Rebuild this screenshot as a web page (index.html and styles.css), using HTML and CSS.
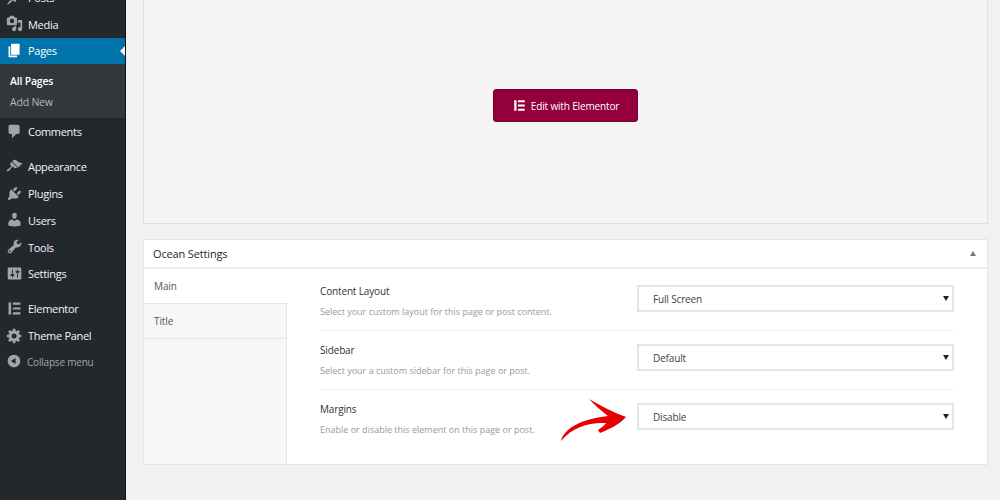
FILE: index.html
```html
<!DOCTYPE html>
<html lang="en">
<head>
<meta charset="utf-8">
<title>Edit Page</title>
<link rel="stylesheet" href="styles.css">
</head>
<body>
<div class="layout">
  <nav class="sidebar">
    <ul class="menu">
      <li class="item"><svg class="ico" viewBox="0 0 20 20"><path d="M10.44 3.02l1.82-1.82 6.36 6.35-1.83 1.82c-1.05-.68-2.48-.57-3.41.36l-.75.75c-.92.93-1.04 2.35-.35 3.41l-1.83 1.82-2.41-2.41-2.8 2.79c-.42.42-3.38 2.71-3.8 2.29s1.86-3.39 2.28-3.81l2.79-2.79L4.1 9.36l1.83-1.82c1.05.69 2.48.57 3.4-.36l.75-.75c.93-.92 1.05-2.35.36-3.41z"/></svg>Posts</li>
      <li class="item"><svg class="ico" viewBox="0 0 20 20"><path d="M13 11V4c0-.55-.45-1-1-1h-1.67L9 1H5L3.67 3H2c-.55 0-1 .45-1 1v7c0 .55.45 1 1 1h10c.55 0 1-.45 1-1zM7 4.5c1.38 0 2.5 1.12 2.5 2.5S8.38 9.5 7 9.5 4.5 8.38 4.5 7 5.62 4.5 7 4.5zM14 6h5v10.5c0 1.38-1.12 2.5-2.5 2.5S14 17.88 14 16.5s1.12-2.5 2.5-2.5c.17 0 .34.02.5.05V9h-3V6zm-4 8.05V13h2v3.5c0 1.38-1.12 2.5-2.5 2.5S7 17.88 7 16.5 8.12 14 9.5 14c.17 0 .34.02.5.05z"/></svg>Media</li>
      <li class="item active"><svg class="ico" viewBox="0 0 20 20"><path d="M6 15V2h10v13H6zm-1 1h8v2H3V5h2v11z"/></svg>Pages</li>
      <li class="submenu">
        <div class="sub-link current">All Pages</div>
        <div class="sub-link">Add New</div>
      </li>
      <li class="item after-sub"><svg class="ico" viewBox="0 0 20 20"><path d="M5 2h9c1.100 0 2 .9 2 2v7c0 1.100-.9 2-2 2h-2l-5 5v-5H5c-1.100 0-2-.9-2-2V4c0-1.100.9-2 2-2z"/></svg>Comments</li>
      <li class="item group-start"><svg class="ico" viewBox="0 0 20 20"><path d="M14.480 11.060L7.410 3.990l1.500-1.500c.5-.56 2.300-.47 3.510.32 1.210.8 1.430 1.280 2.910 2.100 1.180.64 2.450 1.260 4.450.85zm-.71.71L6.700 4.700 4.930 6.470c-.39.39-.39 1.020 0 1.410l1.060 1.060c.39.39.39 1.030 0 1.420-.6.6-1.430 1.110-2.210 1.690-.35.26-.7.53-1.010.84C1.430 13.230.4 14.750 1.100 15.450c.7.7 2.210-.33 3.550-1.670.31-.31.58-.66.84-1.010.58-.78 1.090-1.610 1.690-2.210.39-.39 1.020-.39 1.410 0l1.060 1.060c.39.39 1.020.39 1.410 0z"/></svg>Appearance</li>
      <li class="item"><svg class="ico" viewBox="0 0 20 20"><path d="M13.110 4.360L9.870 7.600 8 5.730l3.240-3.240c.35-.34 1.050-.2 1.560.32.52.51.66 1.210.31 1.550zm-8 1.770l.91-1.120 9.010 9.010-1.190.84c-.71.71-2.630 1.160-3.820 1.160H6.140L4.900 17.260c-.59.59-1.540.59-2.120 0-.59-.58-.59-1.530 0-2.120l1.240-1.240v-3.880c0-1.130.4-3.190 1.090-3.890zm7.260 3.970l3.240-3.240c.34-.35 1.040-.21 1.550.31.52.51.66 1.210.31 1.550l-3.240 3.250z"/></svg>Plugins</li>
      <li class="item"><svg class="ico" viewBox="0 0 20 20"><path d="M10 9.250c-2.270 0-2.730-3.440-2.730-3.440C7 4.020 7.820 2 9.970 2c2.160 0 2.980 2.020 2.710 3.810 0 0-.41 3.440-2.680 3.440zm0 2.570L12.720 10c2.390 0 4.520 2.330 4.520 4.530v2.490s-3.650 1.130-7.240 1.130c-3.650 0-7.240-1.130-7.240-1.130v-2.490c0-2.250 1.940-4.480 4.470-4.480z"/></svg>Users</li>
      <li class="item"><svg class="ico" viewBox="0 0 20 20"><path d="M16.680 9.770c-1.340 1.340-3.300 1.670-4.950.99l-5.410 6.520c-.99.99-2.590.99-3.580 0s-.99-2.590 0-3.570l6.520-5.420c-.68-1.650-.35-3.610.99-4.950 1.280-1.280 3.120-1.620 4.720-1.060l-2.890 2.890 2.820 2.820 2.860-2.870c.53 1.580.18 3.390-1.080 4.650zM3.810 16.210c.4.39 1.040.39 1.430 0 .4-.4.4-1.040 0-1.430-.39-.4-1.030-.4-1.430 0-.39.39-.39 1.030 0 1.430z"/></svg>Tools</li>
      <li class="item"><svg class="ico" viewBox="0 0 20 20"><path d="M18 16V4c0-.55-.45-1-1-1H3c-.55 0-1 .45-1 1v12c0 .55.45 1 1 1h14c.55 0 1-.45 1-1zM8 11h1c.55 0 1 .45 1 1s-.45 1-1 1H8v1.500c0 .28-.22.5-.5.5s-.5-.22-.5-.5V13H6c-.55 0-1-.45-1-1s.45-1 1-1h1V5.500c0-.28.22-.5.5-.5s.5.22.5.5V11zm5-2h-1c-.55 0-1-.45-1-1s.45-1 1-1h1V5.500c0-.28.22-.5.5-.5s.5.22.5.5V7h1c.55 0 1 .45 1 1s-.45 1-1 1h-1v5.500c0 .28-.22.5-.5.5s-.5-.22-.5-.5V9z"/></svg>Settings</li>
      <li class="item group-start"><svg class="ico" viewBox="0 0 20 20"><path d="M3 3h3v14H3zM8 3h9v2.600H8zM8 8.700h9v2.600H8zM8 14.400h9V17H8z"/></svg>Elementor</li>
      <li class="item"><svg class="ico" viewBox="0 0 20 20"><path d="M18 12h-2.180c-.17.7-.44 1.350-.81 1.930l1.540 1.540-2.100 2.100-1.540-1.540c-.58.36-1.230.63-1.910.79V19H8v-2.180c-.68-.16-1.330-.43-1.910-.79l-1.540 1.540-2.120-2.120 1.540-1.540c-.36-.58-.63-1.230-.79-1.910H1V9.030h2.170c.16-.7.44-1.350.8-1.940L2.430 5.550l2.100-2.100 1.540 1.540c.58-.37 1.240-.64 1.930-.81V2h3v2.180c.68.16 1.330.43 1.910.79l1.540-1.540 2.120 2.120-1.540 1.540c.36.59.64 1.240.8 1.940H18V12zm-8.500 1.500c1.660 0 3-1.340 3-3s-1.340-3-3-3-3 1.340-3 3 1.340 3 3 3z"/></svg>Theme Panel</li>
      <li class="item collapse"><svg class="ico" viewBox="0 0 20 20"><path d="M10 2.160c4.330 0 7.840 3.510 7.840 7.840s-3.510 7.840-7.840 7.840S2.160 14.330 2.160 10 5.710 2.160 10 2.160zm2 11.720V6.120L6.180 9.970z"/></svg>Collapse menu</li>
    </ul>
  </nav>
  <main class="content">
    <section class="editor-box">
      <button class="elementor-btn" type="button"><svg class="btn-ico" viewBox="0 0 20 20"><path d="M3 3h3v14H3zM8 3h9v2.600H8zM8 8.700h9v2.600H8zM8 14.400h9V17H8z"/></svg>Edit with Elementor</button>
    </section>
    <section class="metabox">
      <header class="metabox-head"><h2 class="metabox-title">Ocean Settings</h2><span class="toggle"></span></header>
      <div class="metabox-body">
        <div class="tabs">
          <div class="tab tab-active">Main</div>
          <div class="tab">Title</div>
        </div>
        <div class="panel">
          <div class="field">
            <div class="field-text"><div class="field-label">Content Layout</div><div class="field-desc">Select your custom layout for this page or post content.</div></div>
            <div class="select">Full Screen<span class="caret"></span></div>
          </div>
          <div class="field">
            <div class="field-text"><div class="field-label">Sidebar</div><div class="field-desc">Select your a custom sidebar for this page or post.</div></div>
            <div class="select">Default<span class="caret"></span></div>
          </div>
          <div class="field field-last">
            <div class="field-text"><div class="field-label">Margins</div><div class="field-desc">Enable or disable this element on this page or post.</div></div>
            <div class="select">Disable<span class="caret"></span></div>
            <svg class="arrow" viewBox="0 0 70 46"><path d="M1 44C4 32 20 22 48 19C40 13 34 7 29 2C40 8 52 15 66 20C60 27 50 32 40 36L38 33C42 30 45 28 46 26C30 25 12 30 1 44Z"/></svg>
          </div>
        </div>
      </div>
    </section>
  </main>
</div>
</body>
</html>
```
FILE: styles.css
```css
* { box-sizing: border-box; }
html, body { margin: 0; padding: 0; height: 100%; overflow: hidden; }
body { background: #f1f1f1; font-family: "Open Sans", sans-serif; color: #444; }
.layout { display: flex; height: 500px; }

.sidebar { width: 126px; flex: none; background: #23282d; border-right: 1px solid #101214; overflow: hidden; }
.menu { list-style: none; margin: -16px 0 0; padding: 0; }
.item { display: flex; align-items: center; height: 26.8px; color: #f0f5fa; font-size: 11px; letter-spacing: -0.3px; padding-left: 28px; position: relative; }
.ico { position: absolute; left: 6px; top: 4.500px; width: 17px; height: 17px; fill: #a0a5aa; }
.active { background: #0073aa; color: #fff; }
.active .ico { fill: #fff; }
.active::after { content: ""; position: absolute; right: -1px; top: 7px; border: 6px solid transparent; border-right-color: #f1f1f1; }
.submenu { background: #32373c; height: 54px; padding-top: 7px; }
.sub-link { height: 21px; line-height: 21px; padding-left: 10px; font-size: 10.500px; letter-spacing: -0.2px; color: #b4b9be; }
.current { color: #fff; font-weight: 600; }
.after-sub { height: 27px; }
.group-start { margin-top: 8px; }
.collapse { color: #a0a5aa; font-size: 10px; letter-spacing: -0.2px; padding-left: 27px; }
.collapse .ico { left: 6px; width: 16px; height: 16px; }

.content { flex: 1; padding: 0 12px 0 17px; min-width: 0; }
.editor-box { height: 224px; background: #f5f5f5; border: 1px solid #e1e1e1; border-top: 0; padding-top: 89px; display: flex; justify-content: center; align-items: flex-start; }
.elementor-btn { display: flex; align-items: center; justify-content: center; width: 145px; height: 33px; padding: 0; background: #93003c; border: 1px solid #7a0032; border-radius: 3px; color: #fff; font: 400 10px "Open Sans", sans-serif; letter-spacing: -0.15px; }
.btn-ico { width: 15px; height: 15px; fill: #fff; margin-right: 4px; }

.metabox { margin-top: 15px; height: 226px; background: #fff; border: 1px solid #e5e5e5; display: flex; flex-direction: column; }
.metabox-head { height: 29px; flex: none; display: flex; align-items: center; justify-content: space-between; padding: 0 11px 0 9px; border-bottom: 2px solid #eee; }
.metabox-title { margin: 0; font-size: 11px; font-weight: 400; letter-spacing: -0.15px; color: #23282d; }
.toggle { width: 0; height: 0; border: 3.500px solid transparent; border-top: 0; border-bottom: 5px solid #72777c; }
.metabox-body { flex: 1; display: flex; min-height: 0; }

.tabs { width: 143px; flex: none; background: #f7f7f7; border-right: 1px solid #e5e5e5; }
.tab { height: 35px; padding-left: 10px; display: flex; align-items: center; font-size: 10px; letter-spacing: -0.1px; color: #555; background: #f7f7f7; border-bottom: 1px solid #e5e5e5; }
.tab-active { background: #fff; margin-right: -1px; position: relative; }

.panel { flex: 1; padding: 3px 33px 0 33px; min-width: 0; }
.field { display: flex; align-items: flex-start; justify-content: space-between; height: 59px; border-bottom: 1px solid #eee; padding-top: 13px; position: relative; }
.field-last { border-bottom: 0; }
.field-text { margin-top: -1px; }
.field-label { font-size: 10px; letter-spacing: -0.15px; color: #333; line-height: 14px; margin-bottom: 7px; }
.field-desc { font-size: 9px; color: #999; line-height: 14px; }
.select { width: 317px; height: 27px; flex: none; border: 2px solid #e5e5e5; background: #fff; font-size: 10px; letter-spacing: -0.15px; color: #444; display: flex; align-items: center; justify-content: space-between; padding: 0 3px 0 14px; }
.caret { width: 0; height: 0; border: 3px solid transparent; border-bottom: 0; border-top: 5px solid #222; }
.arrow { position: absolute; left: 240px; top: 7px; width: 70px; height: 46px; fill: #e60000; }
```
